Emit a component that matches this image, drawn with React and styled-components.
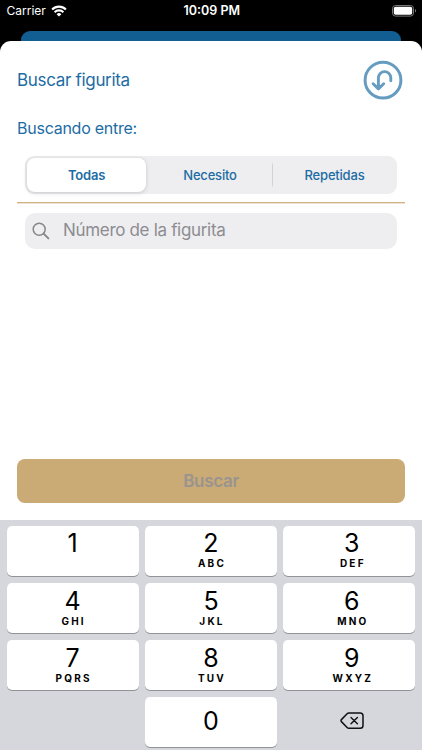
import React, { useState } from 'react';
import styled, { createGlobalStyle } from 'styled-components';

const filters = ['Todas', 'Necesito', 'Repetidas'];

const keys = [
  { digit: '1', letters: '' },
  { digit: '2', letters: 'ABC' },
  { digit: '3', letters: 'DEF' },
  { digit: '4', letters: 'GHI' },
  { digit: '5', letters: 'JKL' },
  { digit: '6', letters: 'MNO' },
  { digit: '7', letters: 'PQRS' },
  { digit: '8', letters: 'TUV' },
  { digit: '9', letters: 'WXYZ' },
];

const WifiIcon = () => (
  <svg width="16" height="12" viewBox="0 0 16 12" fill="none" stroke="#fff" strokeWidth="2.1">
    <path d="M1.1 4.5a9.8 9.8 0 0 1 13.8 0" />
    <path d="M3.6 7.2a6.3 6.3 0 0 1 8.8 0" />
    <path d="M8 11.6L5.6 9.2a3.5 3.5 0 0 1 4.8 0z" fill="#fff" stroke="none" />
  </svg>
);

const BatteryIcon = () => (
  <svg width="25" height="12" viewBox="0 0 25 12">
    <rect x="0.5" y="0.5" width="21" height="10.6" rx="3" fill="none" stroke="#777" />
    <rect x="1.8" y="1.8" width="18.4" height="8" rx="1.8" fill="#fff" />
    <path d="M23 4v3.6c1.5-.6 1.5-3 0-3.6z" fill="#777" />
  </svg>
);

const BackIcon = () => (
  <svg width="40" height="40" viewBox="0 0 40 40" fill="none" stroke="#669cc0" strokeWidth="3">
    <circle cx="20" cy="20.2" r="17.9" />
    <path
      d="M27.8 20.8v-3a6.2 6.2 0 0 0-12.4 0v11.1M10.1 23.7l5.3 5.2 5.3-5.2"
      strokeWidth="2.9"
      strokeLinecap="round"
      strokeLinejoin="round"
    />
  </svg>
);

const SearchIcon = () => (
  <svg width="18" height="18" viewBox="0 0 18 18" fill="none" stroke="#86868b" strokeWidth="1.5">
    <circle cx="7.2" cy="7.2" r="6" />
    <path d="M11.6 11.6l4.8 4.8" strokeWidth="1.9" strokeLinecap="round" />
  </svg>
);

const DeleteIcon = () => (
  <svg width="24" height="18" viewBox="0 0 24 18" fill="none" stroke="#111" strokeWidth="1.5" strokeLinejoin="round">
    <path d="M8.9 1h11.3a2.8 2.8 0 0 1 2.8 2.8v9.6a2.8 2.8 0 0 1-2.8 2.8H8.9a2.6 2.6 0 0 1-1.8-.8L1.4 9.6a1.4 1.4 0 0 1 0-2L7.1 1.8A2.6 2.6 0 0 1 8.9 1z" />
    <path d="M11 5.4l6.4 6.4M17.4 5.4L11 11.8" strokeWidth="1.4" strokeLinecap="round" />
  </svg>
);

const App = () => {
  const [selected, setSelected] = useState(0);
  const [number, setNumber] = useState('');

  return (
    <>
      <GlobalStyle />
      <Screen>
        <StatusBar>
          <Carrier>
            Carrier
            <WifiIcon />
          </Carrier>
          <Clock>10:09 PM</Clock>
          <Battery>
            <BatteryIcon />
          </Battery>
        </StatusBar>
        <BackSheet />
        <Sheet>
          <Header>
            <Title>Buscar figurita</Title>
            <IconButton aria-label="Volver">
              <BackIcon />
            </IconButton>
          </Header>
          <Subtitle>Buscando entre:</Subtitle>
          <Segments>
            {filters.map((filter, index) => (
              <Segment
                key={filter}
                $active={selected === index}
                $divided={index > 1 && selected !== index && selected !== index - 1}
                onClick={() => setSelected(index)}
              >
                {filter}
              </Segment>
            ))}
          </Segments>
          <Separator />
          <SearchField>
            <SearchIcon />
            <SearchInput
              placeholder="Número de la figurita"
              value={number}
              onChange={(e) => setNumber(e.target.value)}
            />
          </SearchField>
          <SubmitButton disabled={!number}>Buscar</SubmitButton>
        </Sheet>
        <Keyboard>
          {keys.map(({ digit, letters }) => (
            <Key key={digit} onClick={() => setNumber(number + digit)}>
              <Digit>{digit}</Digit>
              <Letters>{letters}</Letters>
            </Key>
          ))}
          <ZeroKey onClick={() => setNumber(number + '0')}>
            <Digit>0</Digit>
          </ZeroKey>
          <DeleteKey aria-label="Borrar" onClick={() => setNumber(number.slice(0, -1))}>
            <DeleteIcon />
          </DeleteKey>
        </Keyboard>
      </Screen>
    </>
  );
};

export default App;


const GlobalStyle = createGlobalStyle`
  * {
    box-sizing: border-box;
  }

  body {
    margin: 0;
    background: #000;
    font-family: Inter, "Liberation Sans", sans-serif;
  }

  button, input {
    margin: 0;
    padding: 0;
    border: none;
    background: none;
    font-family: inherit;
    color: inherit;
  }

  svg {
    display: block;
    flex-shrink: 0;
  }
`;

const Screen = styled.div`
  display: flex;
  flex-direction: column;
  width: 422px;
  height: 750px;
  overflow: hidden;
  background: #000;
`;

const StatusBar = styled.div`
  display: grid;
  grid-template-columns: 1fr auto 1fr;
  align-items: center;
  height: 31px;
  padding: 0 5px 10px 6.5px;
  color: #fff;
`;

const Carrier = styled.div`
  display: flex;
  align-items: center;
  gap: 5px;
  font-size: 12px;
`;

const Clock = styled.div`
  font-size: 12.5px;
  font-weight: 600;
`;

const Battery = styled.div`
  display: flex;
  justify-content: flex-end;
`;

const BackSheet = styled.div`
  height: 10px;
  margin: 0 21px;
  border-radius: 9px 9px 0 0;
  background: #125e92;
`;

const Sheet = styled.main`
  display: flex;
  flex-direction: column;
  height: 479px;
  padding: 19px 17px 17px;
  border-radius: 11px 11px 0 0;
  background: #fff;
  color: #1d6ca3;
`;

const Header = styled.header`
  display: flex;
  align-items: center;
  justify-content: space-between;
  height: 40px;
  padding-right: 2px;
`;

const Title = styled.h1`
  margin: 0;
  font-size: 17px;
  font-weight: 400;
  letter-spacing: -0.32px;
`;

const IconButton = styled.button`
  cursor: pointer;
`;

const Subtitle = styled.h2`
  margin: 18px 0 0;
  font-size: 16px;
  font-weight: 400;
  line-height: 20px;
  letter-spacing: -0.25px;
`;

const Segments = styled.div`
  display: grid;
  grid-template-columns: 121px 124px 1fr;
  height: 38px;
  margin: 18px 8px 0;
  padding: 2px 0 2px 2px;
  border-radius: 9px;
  background: #eeeef0;
`;

const Segment = styled.button`
  margin-right: ${({ $active }) => ($active ? '2px' : '0')};
  border-radius: 8px;
  background-color: ${({ $active }) => ($active ? '#fff' : 'transparent')};
  background-image: ${({ $divided }) => ($divided ? 'linear-gradient(#d2d2d5, #d2d2d5)' : 'none')};
  background-size: 1px 24px;
  background-position: left center;
  background-repeat: no-repeat;
  box-shadow: ${({ $active }) => ($active ? '0 1px 4px rgba(0, 0, 0, 0.17)' : 'none')};
  font-size: 13px;
  font-weight: ${({ $active }) => ($active ? 600 : 550)};
  letter-spacing: -0.2px;
  cursor: pointer;
`;

const Separator = styled.hr`
  width: 100%;
  height: 2px;
  margin: 8px 0 0;
  border: none;
  background: linear-gradient(#cfb184 50%, #efe3d0 50%);
`;

const SearchField = styled.label`
  display: flex;
  align-items: center;
  gap: 13px;
  height: 36px;
  margin: 8.5px 8px 0;
  padding: 0 7px;
  border-radius: 10px;
  background: #eeeef0;
`;

const SearchInput = styled.input`
  flex: 1;
  padding-bottom: 1px;
  outline: none;
  color: #000;
  font-size: 17px;
  letter-spacing: -0.32px;

  &::placeholder {
    color: #8c8c91;
    opacity: 1;
  }
`;

const SubmitButton = styled.button`
  height: 44px;
  margin-top: auto;
  border-radius: 8px;
  background: #caaa75;
  color: #fff;
  font-size: 17px;
  font-weight: 600;
  letter-spacing: -0.3px;
  cursor: pointer;

  &:disabled {
    color: #999490;
  }
`;

const Keyboard = styled.div`
  display: grid;
  grid-template-columns: repeat(3, 1fr);
  grid-auto-rows: 50px;
  gap: 7px 6px;
  height: 230px;
  padding: 5.5px 6.5px 0;
  background: #d6d7dd;
`;

const Key = styled.button`
  display: flex;
  flex-direction: column;
  align-items: center;
  padding-top: 2.5px;
  border-radius: 5px;
  background: #fff;
  box-shadow: 0 1px 0 #929398;
  color: #000;
  cursor: pointer;

  &:nth-child(3n) {
    padding-left: 5px;
  }

  &:nth-child(n + 4) {
    padding-top: 3.5px;
  }
`;

const ZeroKey = styled(Key)`
  grid-column: 2;
  justify-content: center;
  padding-bottom: 5px;
`;

const DeleteKey = styled.button`
  display: flex;
  align-items: center;
  justify-content: center;
  padding: 0 0 2px 6px;
  cursor: pointer;
`;

const Digit = styled.span`
  font-size: 25px;
  line-height: 30px;
`;

const Letters = styled.span`
  margin-top: -1px;
  padding-left: 2px;
  font-size: 10px;
  font-weight: 700;
  line-height: 12px;
  letter-spacing: 2.2px;
`;
